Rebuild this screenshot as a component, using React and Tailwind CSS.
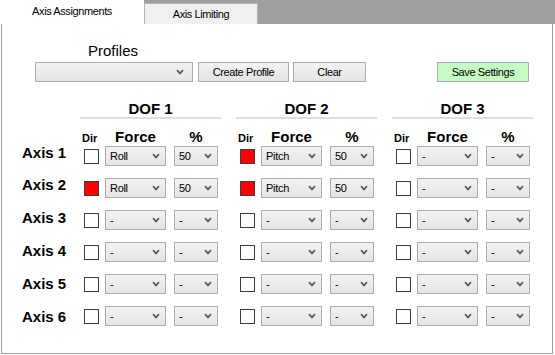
import React from 'react'

const FONT = "font-['Liberation_Sans',Arial,sans-serif]"

const rows = [
  [{ d: false, f: 'Roll', p: '50' }, { d: true, f: 'Pitch', p: '50' }, { d: false, f: '-', p: '-' }],
  [{ d: true, f: 'Roll', p: '50' }, { d: true, f: 'Pitch', p: '50' }, { d: false, f: '-', p: '-' }],
  [{ d: false, f: '-', p: '-' }, { d: false, f: '-', p: '-' }, { d: false, f: '-', p: '-' }],
  [{ d: false, f: '-', p: '-' }, { d: false, f: '-', p: '-' }, { d: false, f: '-', p: '-' }],
  [{ d: false, f: '-', p: '-' }, { d: false, f: '-', p: '-' }, { d: false, f: '-', p: '-' }],
  [{ d: false, f: '-', p: '-' }, { d: false, f: '-', p: '-' }, { d: false, f: '-', p: '-' }],
]

// the axis labels drift slightly against the row pitch
const labelOffset = ['-mt-[2px]', '-mt-[2px]', '-mt-[1px]', 'mt-0', 'mt-[1px]', 'mt-[2px]']

function Chevron() {
  return (
    <svg width="8" height="6" viewBox="0 0 8 6" className="shrink-0">
      <path d="M1 1.2 L4 4.4 L7 1.2" fill="none" stroke="#5a5a5a" strokeWidth="1.7" />
    </svg>
  )
}

function Combo({ className, value }) {
  return (
    <div className={`h-[20px] border border-[#acacac] bg-linear-to-b from-[#f3f3f3] to-[#e4e4e4] flex items-center justify-between pl-[4px] pr-[5px] text-[11px] text-black ${className}`}>
      <span className="tracking-[-0.3px]">{value}</span>
      <Chevron />
    </div>
  )
}

function Button({ className, children }) {
  return (
    <div className={`h-[20px] border border-[#acacac] flex items-center justify-center text-[11px] tracking-[-0.4px] text-black ${className}`}>
      {children}
    </div>
  )
}

export default function App() {
  return (
    <div className={`w-[555px] h-[355px] bg-white ${FONT}`}>
      {/* tabs */}
      <div className="flex h-[24px]">
        <div className="w-[144px] h-[24px] bg-white flex items-center justify-center pb-[1px] text-[11px] tracking-[-0.4px] text-black">
          Axis Assignments
        </div>
        <div className="flex-1 flex items-end bg-[#a0a0a0]">
          <div className="w-[114px] h-[21px] bg-[#f0f0f0] border border-b-0 border-[#b4b4b4] flex items-center justify-center text-[11px] tracking-[-0.4px] text-black">
            Axis Limiting
          </div>
        </div>
      </div>

      {/* panel */}
      <div className="ml-[1px] w-[552px] h-[330px] border-l border-r border-b border-[#a0a0a0] pt-[18px]">
        <div className="pl-[86px] text-[15px] leading-[17px] text-black">Profiles</div>
        <div className="flex mt-[3px] pl-[33px]">
          <Combo className="w-[158px] pr-[8px]" value="" />
          <Button className="w-[91px] ml-[5px] bg-linear-to-b from-[#f3f3f3] to-[#e4e4e4]">Create Profile</Button>
          <Button className="w-[73px] ml-[4px] bg-linear-to-b from-[#f3f3f3] to-[#e4e4e4]">Clear</Button>
          <Button className="w-[92px] ml-[71px] bg-[#c4fcc4]">Save Settings</Button>
        </div>

        {/* DOF headers */}
        <div className="flex mt-[18px] pl-[82px]">
          {['DOF 1', 'DOF 2', 'DOF 3'].map(t => (
            <div key={t} className="w-[156px]">
              <div className="-ml-[4px] w-[141px]">
                <div className="text-center font-bold text-[15px] leading-[17px] text-black">{t}</div>
                <div className="h-[2px] bg-[#dedede]" />
              </div>
            </div>
          ))}
        </div>

        {/* column headers */}
        <div className="flex mt-[9px] pl-[82px]">
          {[0, 1, 2].map(i => (
            <div key={i} className="w-[156px] flex items-baseline font-bold text-black">
              <div className="w-[15px] text-[11px] leading-[13px] -ml-[2px] mr-[2px]">Dir</div>
              <div className="w-[61px] ml-[6px] text-center text-[15px] leading-[17px]">Force</div>
              <div className="w-[44px] ml-[8px] text-center text-[15px] leading-[17px]">%</div>
            </div>
          ))}
        </div>

        {/* rows */}
        <div className="flex flex-col gap-[12px] mt-[1px] pl-[20px]">
          {rows.map((r, i) => (
            <div key={i} className="flex h-[20px]">
              <div className={`w-[62px] ${labelOffset[i]} font-bold text-[15px] leading-[17px] text-black`}>Axis {i + 1}</div>
              {r.map((c, j) => (
                <div key={j} className="w-[156px] flex items-center">
                  <div className={`w-[15px] h-[15px] border border-[#3c3c3c] ${c.d ? 'bg-[#ff0000]' : 'bg-white'}`} />
                  <Combo className="w-[61px] ml-[6px]" value={c.f} />
                  <Combo className="w-[44px] ml-[8px]" value={c.p} />
                </div>
              ))}
            </div>
          ))}
        </div>
      </div>
    </div>
  )
}
